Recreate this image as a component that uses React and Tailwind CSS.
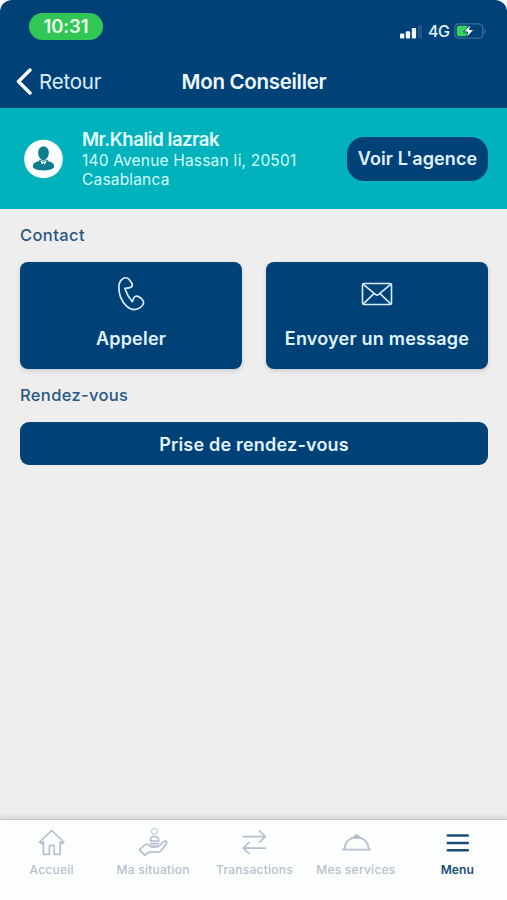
function StatusBar() {
    return (
        <div className="flex h-14 items-start justify-between pl-[29px] pr-[20px] pt-[13px]">
            <div className="flex h-[27px] w-[74px] items-center justify-center rounded-full bg-[#30c755]">
                <span className="text-[18.5px] font-semibold leading-none tracking-[-0.1px] text-[#effff0]">10:31</span>
            </div>
            <div className="mt-[9px] flex h-[18px] items-center">
                <svg className="h-[15px] w-[24px]" viewBox="0 0 24 15" fill="#f3faff">
                    <rect x="0" y="9.5" width="4.3" height="5" rx="1" />
                    <rect x="5.8" y="7.2" width="4.3" height="7.3" rx="1" />
                    <rect x="11.8" y="3.9" width="4.3" height="10.6" rx="1" />
                    <rect x="18" y="1.2" width="4" height="13.3" rx="1" fill="#26567f" />
                </svg>
                <span className="ml-[4px] w-[22px] text-[16px] font-medium leading-none tracking-[-0.4px] text-[#e2f1fb]">4G</span>
                <svg className="ml-[4px] h-[16px] w-[33px]" viewBox="0 0 33 16" fill="none">
                    <rect x="0.8" y="0.8" width="28" height="14.4" rx="4" stroke="#416f98" strokeWidth="1.3" />
                    <path d="M30.5 5.5c1.6.8 1.6 4.2 0 5z" fill="#416f98" />
                    <rect x="2.8" y="2.8" width="11" height="10.4" rx="1.8" fill="#36d45c" />
                    <path d="M16.8 1 9.5 9h4.2l-1.5 6 7.8-8.4h-4.4L16.8 1z" fill="#f4fff8" stroke="#004277" strokeWidth="1" />
                </svg>
            </div>
        </div>
    );
}

function Header() {
    return (
        <header className="h-[108px] shrink-0 rounded-t-[12px] bg-[#004277]">
            <StatusBar />
            <div className="grid h-[51px] grid-cols-[1fr_auto_1fr] items-center pl-4 pr-[15px]">
                <button className="flex items-center text-[#d9edff]">
                    <svg className="h-[27px] w-[17px]" viewBox="0 0 17 27" fill="none" stroke="white" strokeWidth="3.4" strokeLinecap="round" strokeLinejoin="round">
                        <path d="M14 2 2.5 13.5 14 25" />
                    </svg>
                    <span className="ml-[6px] pt-px text-[20.5px] leading-none tracking-[-0.2px]">Retour</span>
                </button>
                <h1 className="pt-px text-[20.5px] font-semibold leading-none tracking-[-0.3px] text-[#eff8ff]">Mon Conseiller</h1>
            </div>
        </header>
    );
}

function Advisor() {
    return (
        <section className="flex h-[101px] shrink-0 items-center bg-[#00b2bb] pl-6 pr-[19px]">
            <svg className="h-[40px] w-[39px] shrink-0" viewBox="0 0 39 40">
                <circle cx="19.5" cy="20" r="19.3" fill="#fcffff" />
                <path d="M14.2 13.8c0-4.1 2.1-6.4 5.3-6.4s5.3 2.3 5.3 6.4c0 3.7-2.2 7.4-5.3 7.4s-5.3-3.7-5.3-7.4z" fill="#0d7c8c" />
                <path d="M15.5 20.4 19.5 22l4-1.6.4 1.6c4.2 1.2 6.2 2.6 6.2 5.5 0 2.5-4.9 3.9-10.6 3.9S8.9 30 8.9 27.5c0-2.9 2-4.3 6.2-5.5z" fill="#0d7c8c" />
                <path d="m16.2 21.6 1.9 4.1 1.4-2 1.4 2 1.9-4.1-3.3 1.3z" fill="#fcffff" />
            </svg>
            <div className="ml-[19px] flex-1 text-[#d5ffff]">
                <p className="text-[18.5px] font-semibold leading-[23px] tracking-[-0.45px] text-[#e4ffff]">Mr.Khalid lazrak</p>
                <p className="text-[15.5px] leading-[19px] tracking-[0.18px]">
                    140 Avenue Hassan Ii, 20501
                    <br />
                    Casablanca
                </p>
            </div>
            <button className="h-[44px] w-[141px] shrink-0 whitespace-nowrap rounded-[17px] bg-[#004277] text-[18px] font-semibold tracking-[0.1px] text-[#e1f3ff]">
                Voir L'agence
            </button>
        </section>
    );
}

function PhoneIcon() {
    return (
        <svg className="h-[36px] w-[30px]" viewBox="0 0 30 36" fill="none" stroke="currentColor" strokeWidth="1.7" strokeLinejoin="round" strokeLinecap="round">
            <path d="M6.2 3.2c2.2-1.7 5.2-1.7 6.8.2 1.5 1.8 3.3 3.6 3.3 5.3 0 1.8-1.5 2.9-3.3 3.1l-4.1.6c1.6 5 3.8 9.2 7.4 13.3l1.4-3.5c.6-1.6 2.4-2.3 4.1-1.8 2.1.6 4.3 2.4 5.3 4.4 1.1 2.4-.2 4.9-2.6 6.6-4.3 3-9.6 2.7-13.9-1.3C5.8 25.7 2.8 18 2.9 10.8c.1-3.4 1-5.9 3.3-7.6z" />
        </svg>
    );
}

function MailIcon() {
    return (
        <svg className="h-[24px] w-[32px]" viewBox="0 0 32 24" fill="none" stroke="currentColor" strokeWidth="1.6" strokeLinejoin="round">
            <rect x="1.5" y="1.5" width="29" height="21" rx="1.5" />
            <path d="m2.3 2.3 12.4 10.3c.8.7 1.8.7 2.6 0L29.7 2.3M2.3 21.8l10.9-10.4M29.7 21.8 18.8 11.4" />
        </svg>
    );
}

function ContactCard({ icon, label }) {
    return (
        <button className="flex h-[107px] flex-col items-center rounded-[8px] bg-[#004277] pt-[14px] text-[#d7edff] shadow-[0_2px_4px_rgba(0,40,80,0.17)]">
            <span className="flex h-9 items-center justify-center">{icon}</span>
            <span className="mt-[15px] whitespace-nowrap text-[18px] font-semibold leading-6 tracking-[0.22px] text-[#e0f3ff]">{label}</span>
        </button>
    );
}

const tabs = [
    {
        label: "Accueil",
        icon: <path d="m2.5 15 12.2-11.5L26.9 15l-1.7 1.5-2-1.8v12.6h-6v-8.2c0-.5-.3-.8-.8-.8h-3.2c-.5 0-.8.3-.8.8v8.2h-6V14.7l-2 1.8z" />,
    },
    {
        label: "Ma situation",
        icon: (
            <>
                <circle cx="16.5" cy="4.3" r="3" strokeWidth="1.3" opacity="0.7" />
                <path d="M12.4 14v-.8c0-2.3 1.6-3.7 4.1-3.7s4.1 1.4 4.1 3.7v.8zM12.8 16.7h7.4M13.7 19.3h6.5" />
                <path d="m1.5 22.7 5.3-4.8c1.7-1.1 3.5-.7 4.9.6l1.7 1.5h4.2c2.4 0 4.7-1.8 6.7-4.2 1.4-1.6 3.8-2.5 4.4-.9.3.8-.4 1.7-1 2.5l-4.5 6.1c-.9 1.3-1.9 1.7-3.4 1.7h-8.1c-1.5 0-2.4.7-4.9 3.1z" />
            </>
        ),
    },
    {
        label: "Transactions",
        icon: <path d="M4.3 9.6h22M20.7 4l5.6 5.6-5.6 5.6M26.3 21.1h-22M9.9 15.5l-5.6 5.6 5.6 5.6" />,
    },
    {
        label: "Mes services",
        icon: (
            <>
                <path d="M2.1 22.6h26.8l-1.2-1.2c-.6-6.3-5.3-11.1-12.1-11.1S4.1 15.1 3.5 21.4z" />
                <path d="m12.4 10.3 3.2-2.4 3.2 2.4-3.2 1z" fill="currentColor" />
            </>
        ),
    },
    {
        label: "Menu",
        active: true,
        icon: <path d="M5.8 8.5h20M5.8 15.9h20M5.8 23.3h20" strokeWidth="2.5" />,
    },
];

function TabBar() {
    return (
        <nav className="-mr-px grid h-[81px] shrink-0 grid-cols-5 border-t border-[#c5c9cb] bg-[#fdfefe] pl-px pt-[7px] shadow-[0_-2px_5px_rgba(0,0,0,0.12)]">
            {tabs.map((tab) => (
                <button
                    key={tab.label}
                    className={`flex flex-col items-center ${tab.active ? "text-[#174d7b]" : "text-[#b5bfcd]"}`}
                >
                    <svg className="h-[30px] w-[30px]" viewBox="0 0 30 30" fill="none" stroke="currentColor" strokeWidth="1.7" strokeLinejoin="round" strokeLinecap="round">
                        {tab.icon}
                    </svg>
                    <span className={`mt-[4px] whitespace-nowrap text-[12px] leading-[18px] ${tab.active ? "font-semibold tracking-[0.1px]" : "font-medium tracking-[0.25px]"}`}>
                        {tab.label}
                    </span>
                </button>
            ))}
        </nav>
    );
}

export default function App() {
    return (
        <div className="flex h-screen flex-col overflow-hidden bg-white font-['Inter',sans-serif]">
            <Header />
            <Advisor />
            <main className="flex-1 bg-[#eeeeee] px-5 pt-[14px]">
                <h2 className="text-[16.5px] font-medium leading-6 tracking-[0.4px] text-[#285883]">Contact</h2>
                <div className="-mr-[1px] mt-[15px] grid grid-cols-2 gap-6">
                    <ContactCard icon={<PhoneIcon />} label="Appeler" />
                    <ContactCard icon={<MailIcon />} label="Envoyer un message" />
                </div>
                <h2 className="mt-[14px] text-[16.5px] font-medium leading-6 tracking-[0.35px] text-[#285883]">Rendez-vous</h2>
                <button className="-mr-[1px] mt-[15px] h-[43px] w-[calc(100%+1px)] rounded-[9px] bg-[#004277] pt-px text-[18px] font-semibold tracking-[0.2px] text-[#e0f3ff]">
                    Prise de rendez-vous
                </button>
            </main>
            <TabBar />
        </div>
    );
}
